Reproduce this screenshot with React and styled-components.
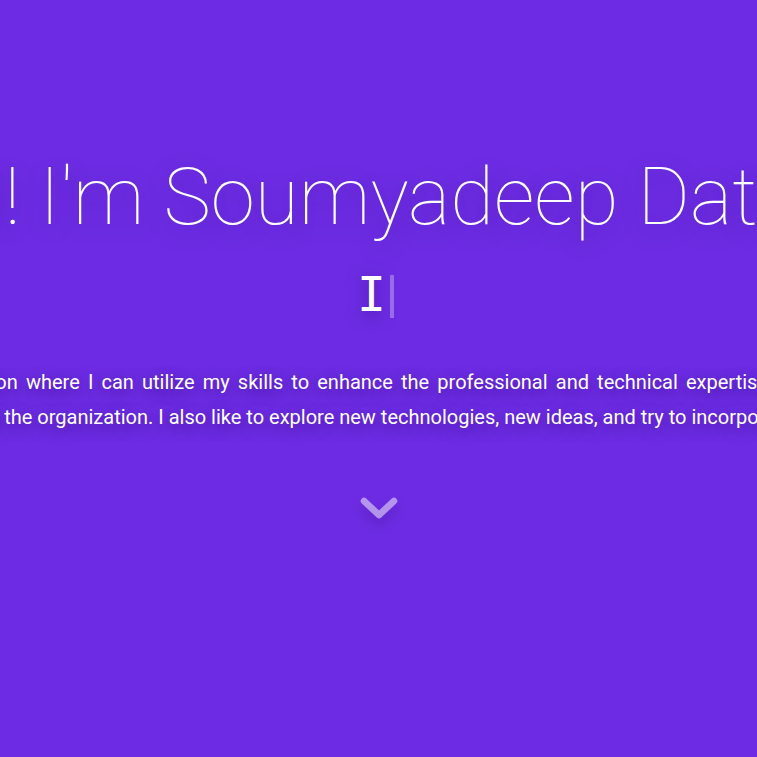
import styled, { createGlobalStyle } from "styled-components";

const GlobalStyle = createGlobalStyle`
  html, body {
    margin: 0;
    padding: 0;
    overflow: hidden;
    background: #6d2ce3;
  }
  * {
    box-sizing: border-box;
  }
`;

const Hero = styled.section`
  min-height: 100vh;
  width: 100vw;
  background-color: #6d2ce3;
  color: #fff;
  display: flex;
  flex-direction: column;
  align-items: center;
  padding-top: 150px;
  overflow: hidden;
`;

const Title = styled.h1`
  margin: 0;
  flex-shrink: 0;
  white-space: nowrap;
  font-family: Roboto, "Noto Sans", sans-serif;
  font-weight: 100;
  font-size: 5rem;
  line-height: normal;
  text-shadow: 0 6px 22px rgba(40, 0, 110, 0.45);
`;

const TypedRow = styled.div`
  margin-top: 22px;
  display: flex;
  align-items: flex-start;
  padding-right: 6px;
  font-family: "DejaVu Sans Mono", monospace;
  font-size: 3rem;
  line-height: normal;
  text-shadow: 0 4px 16px rgba(40, 0, 110, 0.5);
`;

const Cursor = styled.span`
  display: block;
  width: 4px;
  height: 43px;
  margin-top: 9px;
  margin-left: 4px;
  background: rgba(255, 255, 255, 0.3);
`;

const About = styled.p`
  margin: 43px 0 0;
  width: 935px;
  flex-shrink: 0;
  font-family: Roboto, "Noto Sans", sans-serif;
  font-size: 1.25rem;
  line-height: 35px;
  text-align: justify;
  text-shadow: 0 4px 14px rgba(40, 0, 110, 0.55);
`;

const ScrollDown = styled.a`
  margin-top: 54px;
  display: flex;
  width: 40px;
  height: 40px;
  align-items: center;
  justify-content: center;
  filter: drop-shadow(0 7px 6px rgba(30, 0, 90, 0.45));
  cursor: pointer;

  svg {
    display: block;
  }
`;

const App = () => {
  return (
    <>
      <GlobalStyle />
      <Hero>
        <Title>Hi! I'm Soumyadeep Datta</Title>
        <TypedRow>
          <span>I</span>
          <Cursor />
        </TypedRow>
        <About>
          My position where I can utilize my skills to enhance the
          professional and technical expertise, thereby benefiting the
          organization. I also like to explore new technologies, new ideas,
          and try to incorporate it.
        </About>
        <ScrollDown href="#about" aria-label="Scroll down">
          <svg width="40" height="28" viewBox="0 0 40 28" fill="none">
            <polyline
              points="5,6 20,20 35,6"
              stroke="rgba(255,255,255,0.5)"
              strokeWidth="6.5"
              strokeLinecap="round"
              strokeLinejoin="round"
            />
          </svg>
        </ScrollDown>
      </Hero>
    </>
  );
};

export default App;
